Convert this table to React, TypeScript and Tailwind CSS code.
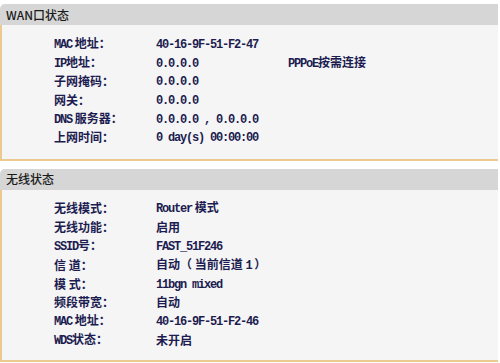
import React from "react";

const cjk = { fontFamily: '"Noto Sans CJK SC", "Liberation Sans", sans-serif' };
const mono = { fontFamily: '"Liberation Mono", "Noto Sans CJK SC", monospace' };

type Row = { label: React.ReactNode; value: React.ReactNode; extra?: React.ReactNode };

function Panel({ title, rows, rowH, pt, pb }: { title: string; rows: Row[]; rowH: string; pt: string; pb: string }) {
  return (
    <div className="w-[498px]">
      <div className="h-[21px] bg-[#d6d6d6] rounded-tl-[5px] flex items-center pl-[6px] text-[12px] text-[#1a1a1a] font-medium" style={cjk}>
        {title}
      </div>
      <div className={`bg-[#f5f5f5] border-l-2 border-b-2 border-[#ecc990] ${pt} ${pb}`}>
        {rows.map((r, i) => (
          <div key={i} className={`flex items-center ${rowH}`}>
            <div className="w-[102px] ml-[52px] text-[12px] text-[#1c1c50] font-semibold" style={cjk}>{r.label}</div>
            <div className="w-[132px] text-[12px] text-[#1c1c50] font-semibold" style={cjk}>{r.value}</div>
            {r.extra && <div className="text-[12px] text-[#1c1c50] font-semibold" style={cjk}>{r.extra}</div>}
          </div>
        ))}
      </div>
    </div>
  );
}

const M = ({ children }: { children: React.ReactNode }) => (
  <span className="text-[12px] font-bold tracking-[-1.2px]" style={mono}>{children}</span>
);

export default function App() {
  const wan: Row[] = [
    { label: <><M>MAC</M> 地址：</>, value: <M>40-16-9F-51-F2-47</M> },
    { label: <><M>IP</M>地址：</>, value: <M>0.0.0.0</M>, extra: <><M>PPPoE</M>按需连接</> },
    { label: "子网掩码：", value: <M>0.0.0.0</M> },
    { label: "网关：", value: <M>0.0.0.0</M> },
    { label: <><M>DNS</M> 服务器：</>, value: <M>0.0.0.0 , 0.0.0.0</M> },
    { label: "上网时间：", value: <M>0 day(s) 00:00:00</M> },
  ];
  const wl: Row[] = [
    { label: "无线模式：", value: <><M>Router</M> 模式</> },
    { label: "无线功能：", value: "启用" },
    { label: <><M>SSID</M>号：</>, value: <M>FAST_51F246</M> },
    { label: "信 道：", value: <>自动（ 当前信道 <M>1</M> ）</> },
    { label: "模 式：", value: <M>11bgn mixed</M> },
    { label: "频段带宽：", value: "自动" },
    { label: <><M>MAC</M> 地址：</>, value: <M>40-16-9F-51-F2-46</M> },
    { label: <><M>WDS</M>状态：</>, value: "未开启" },
  ];
  return (
    <div className="w-[500px] h-[363px] bg-white pt-[4px] overflow-hidden">
      <Panel title="WAN口状态" rows={wan} rowH="h-[18.6px]" pt="pt-[10px]" pb="pb-[12px]" />
      <div className="h-[8px]" />
      <Panel title="无线状态" rows={wl} rowH="h-[18.9px]" pt="pt-[9px]" pb="pb-[10px]" />
    </div>
  );
}
